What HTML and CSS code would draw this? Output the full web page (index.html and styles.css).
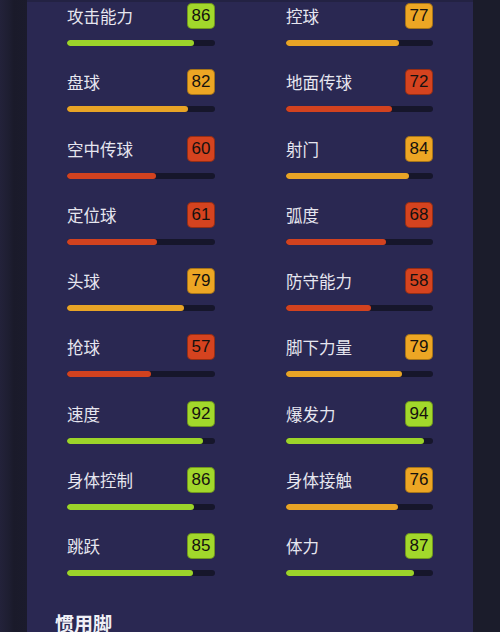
FILE: index.html
```html
<!DOCTYPE html>
<html lang="zh">
<head>
<meta charset="utf-8">
<link rel="stylesheet" href="styles.css">
</head>
<body>
<div class="screen">
  <div class="edge-left"></div>
  <main class="panel">
    <div class="grid">
      <div class="stat"><div class="head"><span class="label">攻击能力</span><span class="badge green">86</span></div><div class="track"><div class="fill green" style="width:86%"></div></div></div>
      <div class="stat"><div class="head"><span class="label">控球</span><span class="badge orange">77</span></div><div class="track"><div class="fill orange" style="width:77%"></div></div></div>
      <div class="stat"><div class="head"><span class="label">盘球</span><span class="badge orange">82</span></div><div class="track"><div class="fill orange" style="width:82%"></div></div></div>
      <div class="stat"><div class="head"><span class="label">地面传球</span><span class="badge red">72</span></div><div class="track"><div class="fill red" style="width:72%"></div></div></div>
      <div class="stat"><div class="head"><span class="label">空中传球</span><span class="badge red">60</span></div><div class="track"><div class="fill red" style="width:60%"></div></div></div>
      <div class="stat"><div class="head"><span class="label">射门</span><span class="badge orange">84</span></div><div class="track"><div class="fill orange" style="width:84%"></div></div></div>
      <div class="stat"><div class="head"><span class="label">定位球</span><span class="badge red">61</span></div><div class="track"><div class="fill red" style="width:61%"></div></div></div>
      <div class="stat"><div class="head"><span class="label">弧度</span><span class="badge red">68</span></div><div class="track"><div class="fill red" style="width:68%"></div></div></div>
      <div class="stat"><div class="head"><span class="label">头球</span><span class="badge orange">79</span></div><div class="track"><div class="fill orange" style="width:79%"></div></div></div>
      <div class="stat"><div class="head"><span class="label">防守能力</span><span class="badge red">58</span></div><div class="track"><div class="fill red" style="width:58%"></div></div></div>
      <div class="stat"><div class="head"><span class="label">抢球</span><span class="badge red">57</span></div><div class="track"><div class="fill red" style="width:57%"></div></div></div>
      <div class="stat"><div class="head"><span class="label">脚下力量</span><span class="badge orange">79</span></div><div class="track"><div class="fill orange" style="width:79%"></div></div></div>
      <div class="stat"><div class="head"><span class="label">速度</span><span class="badge green">92</span></div><div class="track"><div class="fill green" style="width:92%"></div></div></div>
      <div class="stat"><div class="head"><span class="label">爆发力</span><span class="badge green">94</span></div><div class="track"><div class="fill green" style="width:94%"></div></div></div>
      <div class="stat"><div class="head"><span class="label">身体控制</span><span class="badge green">86</span></div><div class="track"><div class="fill green" style="width:86%"></div></div></div>
      <div class="stat"><div class="head"><span class="label">身体接触</span><span class="badge orange">76</span></div><div class="track"><div class="fill orange" style="width:76%"></div></div></div>
      <div class="stat"><div class="head"><span class="label">跳跃</span><span class="badge green">85</span></div><div class="track"><div class="fill green" style="width:85%"></div></div></div>
      <div class="stat"><div class="head"><span class="label">体力</span><span class="badge green">87</span></div><div class="track"><div class="fill green" style="width:87%"></div></div></div>
    </div>
    <h2 class="section-title">惯用脚</h2>
  </main>
  <div class="edge-right"></div>
</div>
</body>
</html>
```
FILE: styles.css
```css
html, body {
  margin: 0;
  padding: 0;
  background: #1b1c2c;
  overflow: hidden;
}
.screen {
  display: flex;
  width: 500px;
  height: 632px;
  overflow: hidden;
}
.edge-left {
  width: 27px;
  flex: none;
  background: linear-gradient(90deg, #23223a 0px, #1e1e31 9px, #1a1a2a 14px, #1b1b2c 27px);
}
.edge-right {
  flex: 1;
  background: #1b1c2b;
}
.panel {
  width: 446px;
  flex: none;
  box-sizing: border-box;
  background: #2a2852;
  border-top: 2px solid #232243;
  padding: 1px 40px 0 40px;
  font-family: "Noto Sans CJK SC", "Noto Sans", sans-serif;
}
.grid {
  display: grid;
  grid-template-columns: 148px 147px;
  column-gap: 71px;
  row-gap: 23.25px;
}
.stat {
  display: flex;
  flex-direction: column;
  gap: 11px;
}
.head {
  display: flex;
  justify-content: space-between;
  align-items: center;
  height: 26px;
}
.label {
  color: #e6e6ef;
  font-size: 16.5px;
  line-height: 26px;
}
.badge {
  width: 28px;
  height: 26px;
  box-sizing: border-box;
  border-radius: 5px;
  display: flex;
  align-items: center;
  justify-content: center;
  font-family: "Liberation Sans", "Noto Sans", sans-serif;
  font-size: 17px;
  color: #14110f;
  box-shadow: inset 0 0 0 1px rgba(0, 0, 0, 0.3);
}
.badge.green { background: #a2d82b; }
.badge.orange { background: #eda624; }
.badge.red { background: #d5431f; }
.track {
  height: 6px;
  border-radius: 3px;
  background: #16162b;
  overflow: hidden;
}
.fill {
  height: 100%;
  border-radius: 3px;
}
.fill.green { background: #9cd42a; }
.fill.orange { background: #e8a426; }
.fill.red { background: #d2421f; }
.section-title {
  margin: 34px 0 0 -12px;
  color: #f0f0f6;
  font-size: 19px;
  font-weight: 700;
  line-height: 26px;
}
```
